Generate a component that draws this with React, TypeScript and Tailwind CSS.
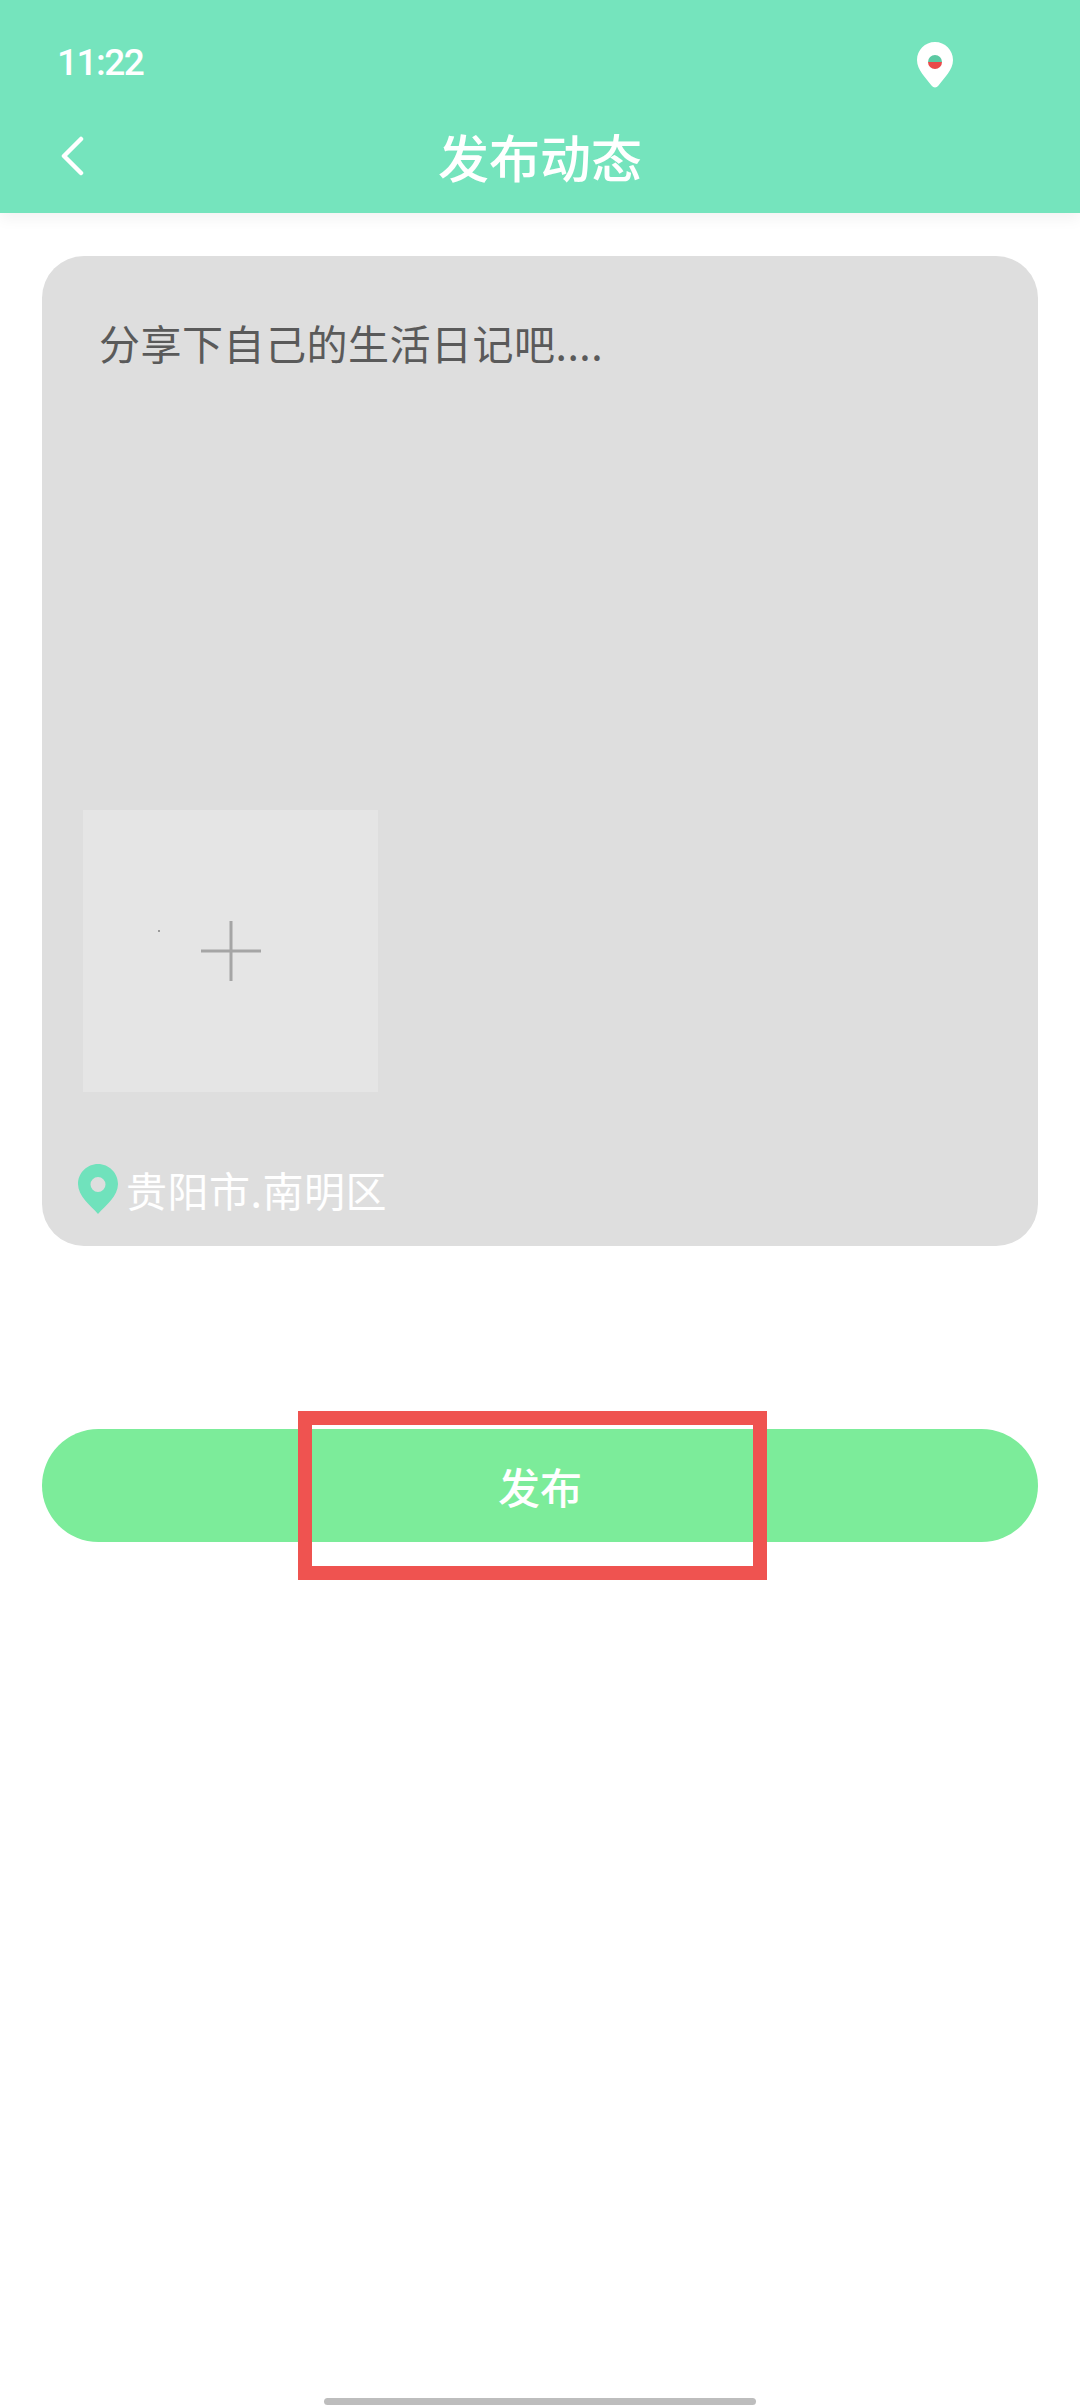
const cjk = "font-['Noto_Sans_CJK_SC','Noto_Sans',sans-serif]";

function StatusPin() {
  return (
    <svg width="36" height="46" viewBox="0 0 36 46">
      <path d="M18 0C8 0 0 8 0 18c0 10 9 18 14.500 25.500C16.500 46 19.500 46 21.500 43.500 27 36 36 28 36 18 36 8 28 0 18 0Z" fill="#fff" />
      <path d="M11 20a7 7 0 0 1 14 0Z" fill="#5cc9a3" />
      <path d="M11 20a7 7 0 0 0 14 0Z" fill="#ea4a4a" />
    </svg>
  );
}

function LocationPin() {
  return (
    <svg width="40" height="50" viewBox="0 0 40 50">
      <path
        fillRule="evenodd"
        d="M20 0C9 0 0 9 0 20c0 12 12 21 20 30 8-9 20-18 20-30C40 9 31 0 20 0Zm0 13a7.500 7.500 0 1 1 0 15 7.500 7.500 0 0 1 0-15Z"
        fill="#70e2bc"
      />
    </svg>
  );
}

function App() {
  return (
    <div className={`relative flex h-[2408px] w-[1080px] flex-col overflow-hidden bg-white ${cjk}`}>
      <header className="flex h-[213px] flex-col bg-[#75e4bd] shadow-[0_6px_14px_rgba(0,0,0,0.05)]">
        <div className="flex h-[129px] items-start justify-between pl-[57px] pr-[127px]">
          <span className="mt-[41px] font-['Roboto',sans-serif] text-[37px] leading-[44px] font-medium tracking-[-1.5px] text-white">11:22</span>
          <span className="mt-[42px]">
            <StatusPin />
          </span>
        </div>
        <div className="-mt-[3px] grid grid-cols-[1fr_auto_1fr] items-center">
          <svg className="ml-[60px]" width="24" height="40" viewBox="0 0 24 40" fill="none">
            <path d="M21 3 4 20l17 17" stroke="#fff" strokeWidth="4.500" strokeLinecap="round" strokeLinejoin="round" />
          </svg>
          <h1 className="text-[51px] leading-[60px] font-medium text-white">发布动态</h1>
        </div>
      </header>

      <section className="mx-[42px] mt-[43px] flex h-[990px] flex-col rounded-[42px] bg-[#dedede]">
        <p className="mt-[58px] ml-[57px] text-[41px] leading-[56px] tracking-[0.5px] text-[#5a5a5a]">分享下自己的生活日记吧....</p>
        <div className="relative mt-[440px] ml-[41px] flex h-[282px] w-[295px] items-center justify-center bg-[#e5e5e5]">
          <span className="absolute top-[120px] left-[75px] h-[2px] w-[2px] bg-[#9a9a9a]" />
          <svg width="60" height="60" viewBox="0 0 60 60">
            <path d="M30 0v60M0 30h60" stroke="#a5a5a5" strokeWidth="3" />
          </svg>
        </div>
        <div className="mt-[72px] ml-[36px] flex items-center gap-[8px]">
          <LocationPin />
          <span className="text-[41px] leading-[50px] tracking-[0.5px] text-white">贵阳市.南明区</span>
        </div>
      </section>

      <button
        type="button"
        className="mx-[42px] mt-[183px] h-[113px] rounded-full bg-[#7cec9a] text-[42px] font-medium text-white"
      >
        发布
      </button>

      {/* red annotation over the button */}
      <div className="absolute top-[1411px] left-[298px] h-[169px] w-[469px] border-[14px] border-[#ef5350]" />

      <div className="mx-auto mt-auto mb-[3px] h-[7px] w-[432px] rounded-full bg-[#bdbdbd]" />
    </div>
  );
}

export default App;
